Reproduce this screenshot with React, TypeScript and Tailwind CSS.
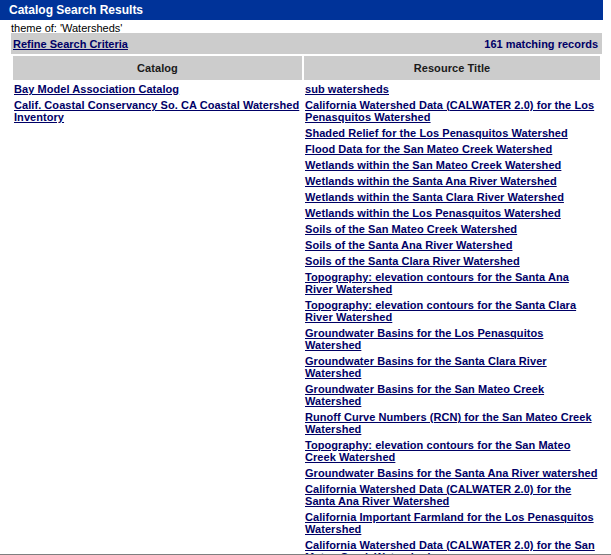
const rows: [string, string][] = [
  ["Bay Model Association Catalog", "sub watersheds"],
  [
    "Calif. Coastal Conservancy So. CA Coastal Watershed Inventory",
    "California Watershed Data (CALWATER 2.0) for the Los Penasquitos Watershed",
  ],
  ["", "Shaded Relief for the Los Penasquitos Watershed"],
  ["", "Flood Data for the San Mateo Creek Watershed"],
  ["", "Wetlands within the San Mateo Creek Watershed"],
  ["", "Wetlands within the Santa Ana River Watershed"],
  ["", "Wetlands within the Santa Clara River Watershed"],
  ["", "Wetlands within the Los Penasquitos Watershed"],
  ["", "Soils of the San Mateo Creek Watershed"],
  ["", "Soils of the Santa Ana River Watershed"],
  ["", "Soils of the Santa Clara River Watershed"],
  ["", "Topography: elevation contours for the Santa Ana River Watershed"],
  ["", "Topography: elevation contours for the Santa Clara River Watershed"],
  ["", "Groundwater Basins for the Los Penasquitos Watershed"],
  ["", "Groundwater Basins for the Santa Clara River Watershed"],
  ["", "Groundwater Basins for the San Mateo Creek Watershed"],
  ["", "Runoff Curve Numbers (RCN) for the San Mateo Creek Watershed"],
  ["", "Topography: elevation contours for the San Mateo Creek Watershed"],
  ["", "Groundwater Basins for the Santa Ana River watershed"],
  ["", "California Watershed Data (CALWATER 2.0) for the Santa Ana River Watershed"],
  ["", "California Important Farmland for the Los Penasquitos Watershed"],
  ["", "California Watershed Data (CALWATER 2.0) for the San Mateo Creek Watershed"],
  ["", "Soils of the Los Penasquitos Watershed"],
  ["", "Flood Data for the Santa Ana River Watershed"],
]

const linkCls = "text-[#000066] underline decoration-1 underline-offset-[1px]"

export default function App() {
  return (
    <div className="h-[555px] overflow-hidden border-b border-[#7f7f7f] bg-white text-[11px] leading-[12px] text-black font-['Liberation_Sans',Arial,sans-serif]">
      <div className="w-[603px] h-[20px] bg-[#003399] pl-[9px] text-[12px] leading-[20px] font-bold text-white">
        Catalog Search Results
      </div>
      <div className="pl-[11px] pt-[2px] h-[13px] leading-[12px]">theme of: 'Watersheds'</div>
      <div className="ml-[11px] w-[591px] h-[21px] bg-[#cccccc] flex items-center justify-between px-[2px] font-bold">
        <a href="#" className={linkCls}>
          Refine Search Criteria
        </a>
        <span className="text-[#000066] pr-[2px]">161 matching records</span>
      </div>
      <div className="ml-[11px] w-[591px] p-[2px] grid grid-cols-[289px_296px] gap-[2px] font-bold tracking-[0.06px]">
        <div className="h-[24px] bg-[#cccccc] flex items-center justify-center text-[#1a1a1a]">Catalog</div>
        <div className="h-[24px] bg-[#cccccc] flex items-center justify-center text-[#1a1a1a]">Resource Title</div>
        {rows.map(([cat, title], i) => (
          <div key={i} className="contents">
            <div className="p-[1px]">
              {cat && (
                <a href="#" className={linkCls}>
                  {cat}
                </a>
              )}
            </div>
            <div className="p-[1px]">
              <a href="#" className={linkCls}>
                {title}
              </a>
            </div>
          </div>
        ))}
      </div>
    </div>
  )
}
